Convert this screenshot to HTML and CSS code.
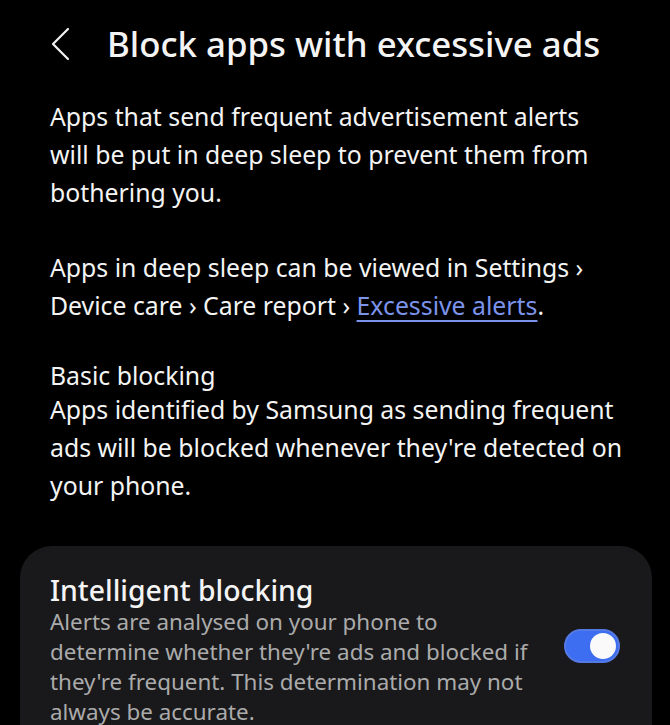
FILE: index.html
```html
<!DOCTYPE html>
<html lang="en">
<head>
<meta charset="utf-8">
<title>Block apps with excessive ads</title>
<link rel="stylesheet" href="styles.css">
</head>
<body>
<header class="top-bar">
  <svg class="back" width="20" height="34" viewBox="0 0 20 34" aria-hidden="true">
    <polyline points="17,2 2,17 17,32" fill="none" stroke="#f2f2f2" stroke-width="2.2" stroke-linecap="round" stroke-linejoin="round"/>
  </svg>
  <h1 class="title">Block apps with excessive ads</h1>
</header>
<main class="content">
  <p class="para">Apps that send frequent advertisement alerts<br>will be put in deep sleep to prevent them from<br>bothering you.</p>
  <p class="para">Apps in deep sleep can be viewed in Settings &#8250;<br>Device care &#8250; Care report &#8250; <a class="link" href="#">Excessive alerts</a>.</p>
  <section class="block">
    <div class="block-title">Basic blocking</div>
    <p class="para">Apps identified by Samsung as sending frequent<br>ads will be blocked whenever they're detected on<br>your phone.</p>
  </section>
</main>
<section class="card">
  <div class="card-text">
    <div class="card-title">Intelligent blocking</div>
    <p class="card-desc">Alerts are analysed on your phone to<br>determine whether they're ads and blocked if<br>they're frequent. This determination may not<br>always be accurate.</p>
  </div>
  <div class="switch"><span class="thumb"></span></div>
</section>
</body>
</html>
```
FILE: styles.css
```css
html, body {
  margin: 0;
  padding: 0;
  background: #000;
}
body {
  font-family: "Noto Sans", "DejaVu Sans", sans-serif;
  color: #f4f4f4;
  width: 670px;
  height: 725px;
  overflow: hidden;
}
.top-bar {
  display: flex;
  align-items: center;
  padding: 22px 0 0 51px;
  height: 44px;
}
.back {
  display: block;
  flex: none;
}
.title {
  margin: 0 0 0 36px;
  font-size: 34.8px;
  font-weight: 500;
  line-height: 44px;
  white-space: nowrap;
}
.content {
  padding: 31px 0 0 50px;
}
.para {
  margin: 0;
  font-size: 24.8px;
  line-height: 38px;
  white-space: nowrap;
}
.para + .para {
  margin-top: 37px;
}
.block {
  margin-top: 36px;
}
.block-title {
  font-size: 24.8px;
  line-height: 30px;
}
.link {
  color: #7b93ea;
  text-decoration: underline;
  text-decoration-thickness: 2px;
  text-underline-offset: 5px;
}
.card {
  margin: 42px 18px 0 20px;
  background: #19191b;
  border-radius: 32px 32px 0 0;
  padding: 27px 32px 24px 30px;
  display: flex;
  align-items: center;
  justify-content: space-between;
}
.card-title {
  font-size: 28.4px;
  font-weight: 500;
  line-height: 34px;
}
.card-desc {
  margin: 0;
  font-size: 22.4px;
  line-height: 30px;
  color: #ababab;
  white-space: nowrap;
}
.switch {
  flex: none;
  width: 52px;
  height: 30px;
  border-radius: 17px;
  background: #3d6df0;
  border: 2px solid #5479e4;
  position: relative;
  margin-bottom: 8px;
}
.thumb {
  position: absolute;
  right: 2px;
  top: 2px;
  width: 26px;
  height: 26px;
  border-radius: 50%;
  background: #fafafa;
}
```
